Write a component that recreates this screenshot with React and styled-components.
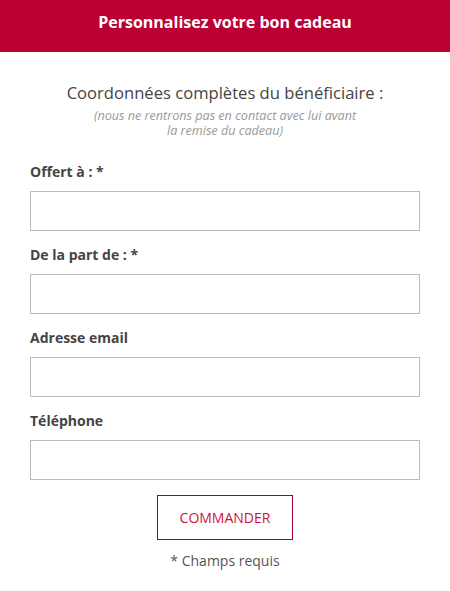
import React from "react";
import styled, { createGlobalStyle } from "styled-components";

const GlobalStyle = createGlobalStyle`
  body {
    margin: 0;
    background: #fff;
    font-family: "Open Sans", "Liberation Sans", sans-serif;
  }
`;

const fields = [
  { id: "offert", label: "Offert à : *" },
  { id: "part", label: "De la part de : *" },
  { id: "email", label: "Adresse email" },
  { id: "tel", label: "Téléphone" },
];

const App = () => {
  return (
    <Page>
      <GlobalStyle />
      <Header>Personnalisez votre bon cadeau</Header>
      <Form>
        <Heading>Coordonnées complètes du bénéficiaire :</Heading>
        <Note>
          (nous ne rentrons pas en contact avec lui avant
          <br />
          la remise du cadeau)
        </Note>
        <Fields>
          {fields.map((f) => (
            <Field key={f.id}>
              <Label htmlFor={f.id}>{f.label}</Label>
              <Input id={f.id} type="text" />
            </Field>
          ))}
        </Fields>
        <Submit type="button">COMMANDER</Submit>
        <Required>* Champs requis</Required>
      </Form>
    </Page>
  );
};

export default App;

const Page = styled.div`
  width: 450px;
  min-height: 591px;
  background: #fff;
`;

const Header = styled.div`
  height: 52px;
  background: #bb0033;
  color: #fff;
  font-size: 16px;
  font-weight: 700;
  display: flex;
  align-items: center;
  justify-content: center;
  padding-bottom: 8px;
  box-sizing: border-box;
`;

const Form = styled.div`
  padding: 30px 30px 0;
  display: flex;
  flex-direction: column;
  align-items: center;
`;

const Heading = styled.h2`
  margin: 0;
  font-size: 16.6px;
  font-weight: 400;
  line-height: 22px;
  color: #444;
  text-align: center;
`;

const Note = styled.p`
  margin: 4px 0 0;
  font-size: 12.6px;
  font-style: italic;
  line-height: 15px;
  color: #999;
  text-align: center;
`;

const Fields = styled.div`
  align-self: stretch;
  margin-top: 24px;
  display: flex;
  flex-direction: column;
  gap: 14px;
`;

const Field = styled.div`
  display: flex;
  flex-direction: column;
  gap: 9px;
`;

const Label = styled.label`
  font-size: 14px;
  font-weight: 700;
  line-height: 20px;
  color: #444;
`;

const Input = styled.input`
  height: 40px;
  box-sizing: border-box;
  border: 1px solid #bbb;
  background: #fff;
  padding: 0 10px;
  font-family: inherit;
  font-size: 14px;
  outline: none;
`;

const Submit = styled.button`
  margin-top: 15px;
  width: 136px;
  height: 45px;
  border: 1px solid #a8002d;
  background: #fff;
  color: #d1103f;
  font-family: inherit;
  font-size: 14px;
  cursor: pointer;
`;

const Required = styled.p`
  margin: 11px 0 0;
  font-size: 14px;
  line-height: 20px;
  color: #555;
`;
